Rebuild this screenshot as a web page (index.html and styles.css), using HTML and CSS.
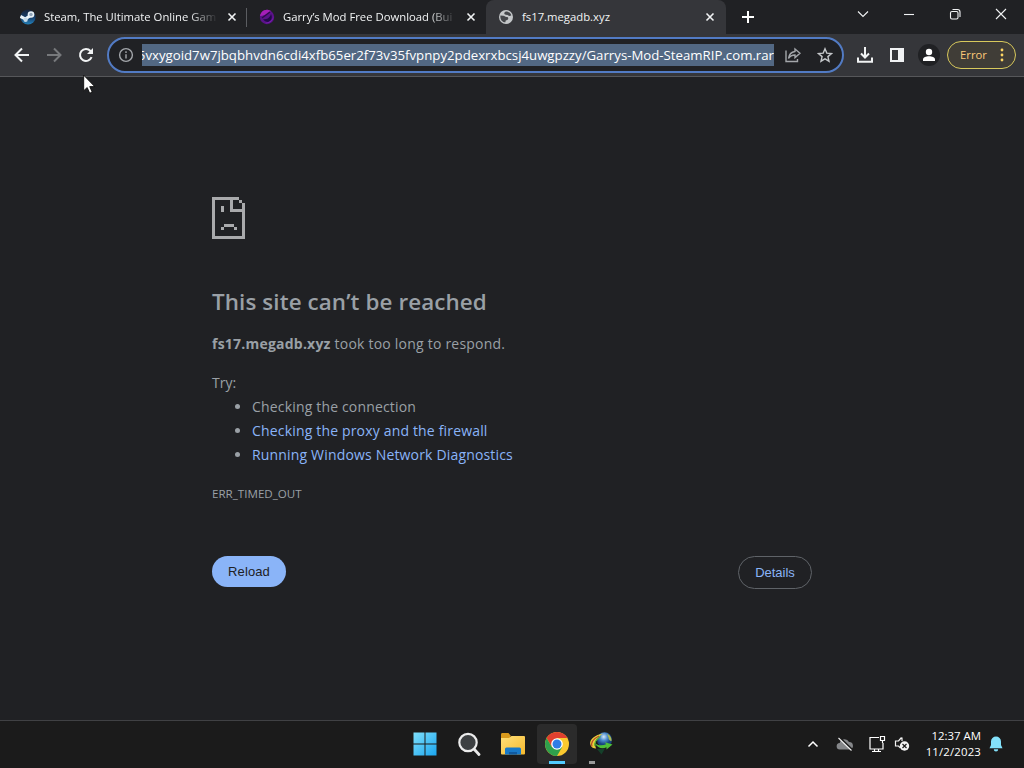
FILE: index.html
```html
<!DOCTYPE html>
<html lang="en">
<head>
    <meta charset="UTF-8">
    <meta name="viewport" content="width=device-width, initial-scale=1.0">
    <title>fs17.megadb.xyz</title>
    <link rel="stylesheet" href="styles.css">
</head>
<body>
    <header class="tab-strip">
        <div class="tab first">
            <svg class="favicon" width="16" height="16" viewBox="0 0 16 16">
                <defs><linearGradient id="steam" x2="0" y2="1"><stop offset="0" stop-color="#18243a"/><stop offset=".55" stop-color="#17406e"/><stop offset="1" stop-color="#2484bd"/></linearGradient></defs>
                <circle cx="8" cy="8" r="7.6" fill="url(#steam)"/>
                <path d="M.4 7.400l5 2.600 5-3.500" fill="none" stroke="#e8f1f8" stroke-width="3"/>
                <circle cx="11" cy="5.500" r="3.300" fill="#e8f1f8"/>
                <circle cx="11" cy="5.500" r="1.700" fill="#8fa3b8"/>
                <circle cx="5.600" cy="10.800" r="2.200" fill="#c3d8e8"/>
            </svg>
            <span class="tab-title">Steam, The Ultimate Online Gam</span>
            <svg class="tab-close" width="10" height="10" viewBox="0 0 10 10"><path d="M1.500 1.500l7 7m0-7l-7 7"/></svg>
        </div>
        <div class="tab">
            <svg class="favicon" width="16" height="16" viewBox="0 0 16 16">
                <circle cx="8" cy="8" r="7.200" fill="#5b128a"/>
                <path d="M1 7a7 7 0 0 1 11-5C8 3 7 7 1 7z" fill="#a51fb8"/>
                <path d="M4 10c5 1 7-2 8-5 2 4 0 7-3 8-2 0-4-1-5-3z" fill="#220a48"/>
                <path d="M6 14c4 0 8-3 8.600-7A7 7 0 0 1 6 14z" fill="#8222ba"/>
                <path d="M3 9l8-6" stroke="#2b0c48" stroke-width="1.200"/>
            </svg>
            <span class="tab-title">Garry’s Mod Free Download (Bui</span>
            <svg class="tab-close" width="10" height="10" viewBox="0 0 10 10"><path d="M1.500 1.500l7 7m0-7l-7 7"/></svg>
        </div>
        <div class="tab active">
            <svg class="favicon" width="16" height="16" viewBox="0 0 16 16">
                <circle cx="8" cy="8" r="7" fill="#c4c7c9"/>
                <path d="M2.400 6.500l3 .3C7 7 7 8 8.500 8s2.200.8 1.500 2.300-2.500.7-2.500 2v1C4 13.300 2 10 2.400 6.500zM8 2.500c2.500 0 4.500 1.500 5.300 3.700-.8 1-2.300 1-3 .3S8.500 6 7 5.500 6.500 2.700 8 2.500z" fill="#45474b"/>
            </svg>
            <span class="tab-title">fs17.megadb.xyz</span>
            <svg class="tab-close" width="10" height="10" viewBox="0 0 10 10"><path d="M1.500 1.500l7 7m0-7l-7 7"/></svg>
        </div>
        <svg class="new-tab" width="14" height="14" viewBox="0 0 14 14"><path d="M7 1v12M1 7h12"/></svg>
        <div class="window-buttons">
            <svg width="12" height="12" viewBox="0 0 12 12"><path d="M1 3.500l5 5 5-5"/></svg>
            <svg width="12" height="12" viewBox="0 0 12 12"><path d="M1 6.500h10"/></svg>
            <svg width="12" height="12" viewBox="0 0 12 12"><rect x="1.500" y="3.500" width="7.500" height="7.500" rx="1.500"/><path d="M3.500 1.500H8.500a2.500 2.500 0 0 1 2.500 2.500v5"/></svg>
            <svg width="12" height="12" viewBox="0 0 12 12"><path d="M1 1l10 10M11 1L1 11"/></svg>
        </div>
    </header>

    <nav class="toolbar">
        <svg class="nav-icon" width="16" height="16" viewBox="0 0 16 16"><path d="M15 8H2M8 1.500L1.500 8 8 14.500"/></svg>
        <svg class="nav-icon disabled" width="16" height="16" viewBox="0 0 16 16"><path d="M1 8h13M8 1.500L14.500 8 8 14.500"/></svg>
        <svg class="nav-icon" width="16" height="16" viewBox="0 0 16 16"><path d="M13.600 10.200A6 6 0 1 1 12.500 4L14 5.500"/><path d="M15 1v6H9z" class="solid"/></svg>
        <div class="omnibox">
            <svg class="info" width="16" height="16" viewBox="0 0 16 16"><circle cx="8" cy="8" r="6.400"/><path d="M8 7.200v4.300M8 4.300v1.600"/></svg>
            <div class="url"><span>5vxygoid7w7jbqbhvdn6cdi4xfb65er2f73v35fvpnpy2pdexrxbcsj4uwgpzzy/Garrys-Mod-SteamRIP.com.rar</span></div>
            <svg class="box-icon" width="16" height="16" viewBox="0 0 16 16"><path d="M1 3.500v11h11.500V12M10 2l5 4.300-5 4.300V8C7 8 5 9 3.500 11.500 4 7.500 6.500 5 10 4.500z"/></svg>
            <svg class="box-icon star" width="16" height="16" viewBox="0 0 16 16"><path d="M8 1.800l1.800 4.300 4.700.4-3.600 3.100 1.100 4.600L8 11.800l-4 2.400 1.100-4.600L1.500 6.500l4.700-.4z"/></svg>
        </div>
        <svg class="tool download" width="18" height="18" viewBox="0 0 18 18"><path d="M9 1v10M5 7.500l4 4 4-4M2 11.500v4.300h14v-4.300"/></svg>
        <svg class="tool" width="16" height="16" viewBox="0 0 16 16"><path d="M1 1h14v14H1zM3 3v10h6V3z" fill="#f1f3f4" fill-rule="evenodd"/></svg>
        <svg class="tool avatar" width="22" height="22" viewBox="0 0 22 22"><circle cx="11" cy="11" r="11" fill="#202124"/><circle cx="11" cy="8" r="3.200" fill="#fff"/><path d="M5 17v-1.500c0-2.200 3-3.300 6-3.300s6 1.100 6 3.300V17z" fill="#fff"/></svg>
        <button class="error-chip">Error <svg width="4" height="16" viewBox="0 0 4 16"><circle cx="2" cy="3" r="1.400"/><circle cx="2" cy="8" r="1.400"/><circle cx="2" cy="13" r="1.400"/></svg></button>
    </nav>

    <main class="error-page">
        <svg class="sad-page" width="33" height="42" viewBox="0 0 33 42" shape-rendering="crispEdges">
            <path d="M0 0h27v3H3v36h27V6h3v36H0zM27 3h3v3h-3zM18 3h3v9h12v3H18zM9 9h3v6H9zM12 27h10v3H12zM9 30h3v3H9zM22 30h3v3h-3z"/>
        </svg>
        <h1>This site can’t be reached</h1>
        <p class="summary"><strong>fs17.megadb.xyz</strong> took too long to respond.</p>
        <p class="try">Try:</p>
        <ul class="suggestions">
            <li>Checking the connection</li>
            <li><a href="#">Checking the proxy and the firewall</a></li>
            <li><a href="#">Running Windows Network Diagnostics</a></li>
        </ul>
        <p class="error-code">ERR_TIMED_OUT</p>
        <div class="buttons">
            <button class="reload">Reload</button>
            <button class="details">Details</button>
        </div>
    </main>

    <footer class="taskbar">
        <div class="apps">
            <div class="app">
                <svg width="24" height="24" viewBox="0 0 24 24">
                    <defs><linearGradient id="win" x2="1" y2="1"><stop offset="0" stop-color="#7fe0fb"/><stop offset="1" stop-color="#1aa5f0"/></linearGradient></defs>
                    <path d="M.5.500h11v11H.5zM12.500.500h11v11h-11zM.5 12.500h11v11H.5zM12.500 12.500h11v11h-11z" fill="url(#win)"/>
                </svg>
            </div>
            <div class="app">
                <svg width="24" height="24" viewBox="0 0 24 24"><path d="M17 17l5 5.500" stroke="#e8e8e8" stroke-width="2.800" stroke-linecap="round"/><circle cx="11" cy="10.500" r="8.700" fill="#3d4042" stroke="#ececec" stroke-width="2.200"/></svg>
            </div>
            <div class="app">
                <svg width="26" height="24" viewBox="0 0 26 24">
                    <defs><linearGradient id="folder" x2="1" y2="1"><stop offset="0" stop-color="#ffe07a"/><stop offset="1" stop-color="#f5b92d"/></linearGradient></defs>
                    <path d="M1 2.500C1 1.500 1.500 1 2.500 1h6l2 2.500V6H1z" fill="#d99a1c"/>
                    <path d="M1 6h8l2.500-2H24q1 0 1 1v16.500q0 1-1 1H2q-1 0-1-1z" fill="url(#folder)"/>
                    <path d="M5 22.500V17q0-1.500 1.500-1.500h13Q21 15.500 21 17v5.500z" fill="#1879c8"/>
                    <path d="M9 22.500V20h8v2.500z" fill="#115a9f"/>
                </svg>
            </div>
            <div class="app current">
                <svg width="24" height="24" viewBox="0 0 24 24">
                    <circle cx="12" cy="12" r="12" fill="#fbc92f"/>
                    <path d="M1.610 6A12 12 0 0 1 22.390 6H12L6.800 15z" fill="#e0402f"/>
                    <path d="M1.610 6L6.800 15 17.200 15 12 24A12 12 0 0 1 1.610 6z" fill="#2fa04c"/>
                    <circle cx="12" cy="12" r="5.800" fill="#fff"/>
                    <circle cx="12" cy="12" r="4.500" fill="#2f7de6"/>
                </svg>
            </div>
            <div class="app idm">
                <svg width="24" height="24" viewBox="0 0 24 24">
                    <defs><radialGradient id="globe" cx=".45" cy=".3"><stop offset="0" stop-color="#d5e8f8"/><stop offset=".5" stop-color="#4d8ccf"/><stop offset="1" stop-color="#17457f"/></radialGradient></defs>
                    <circle cx="15.500" cy="7.800" r="7.500" fill="url(#globe)"/>
                    <path d="M18 2c3 1 5 4 4.500 7-2 0-3-2-3-3.500z" fill="#a9b851"/>
                    <path d="M14 1.500C6 3 .5 7 1.200 12c.5 3 3 4.500 6 4.500C5 13 6 7 14 1.500z" fill="#e8cf3a"/>
                    <path d="M10 4C4 7 1.500 10 3 14.500" fill="none" stroke="#b9482a" stroke-width="1.200"/>
                    <path d="M11.500 4.500C6.500 8 5 11 6 14" fill="none" stroke="#4fae3a" stroke-width="1.200"/>
                    <path d="M6 11.500c4 2.500 8 2 11 .8l-1-2 7.500 2.200-6 5v-2.200c-4 2-9 1-11.500-3.800z" fill="#4fc038"/>
                    <path d="M8 17l8-.5-3.500 6z" fill="#15402a"/>
                </svg>
            </div>
        </div>
        <div class="tray">
            <svg width="12" height="8" viewBox="0 0 12 8"><path d="M1.500 6.500L6 2l4.500 4.500" fill="none" stroke="#fff" stroke-width="1.500"/></svg>
            <svg class="cloud" width="18" height="14" viewBox="0 0 18 14"><path d="M4 12.500a3.200 3.200 0 0 1-.3-6.400A5 5 0 0 1 13 5a3.800 3.800 0 0 1 1 7.500z" fill="#85878a"/><path d="M3.500.500l13 12.500" stroke="#1b1b1b" stroke-width="2"/><path d="M2.500 1l13 12.500" stroke="#f2f2f2" stroke-width="1.100"/></svg>
            <svg class="network" width="18" height="18" viewBox="0 0 18 18"><path d="M11 2.500H2v11.500h13V8M6.500 14v2.500M10.500 14v2.500M4 16.500h9M12.500 1.500h4v4h-4zM14.500 5.500v2.500" fill="none" stroke="#fff" stroke-width="1.200"/></svg>
            <svg class="volume" width="16" height="16" viewBox="0 0 16 16"><path d="M7.500 1.500L4.500 5H1.500v5h3l2 2M8 1.500V5" fill="none" stroke="#f4f4f4" stroke-width="1.200"/><circle cx="10.500" cy="10" r="4.700" fill="#f4f4f4"/><path d="M8.500 8l4 4m0-4l-4 4" stroke="#1b1b1b" stroke-width="1.200"/></svg>
            <div class="clock"><span>12:37 AM</span><span class="date">11/2/2023</span></div>
            <svg width="14" height="16" viewBox="0 0 14 16"><path d="M7 .5a5 5 0 0 1 5 5V9l1.500 3.200H.5L2 9V5.500a5 5 0 0 1 5-5zM4.800 13.200h4.400a2.200 2.200 0 0 1-4.400 0z" fill="#83e1fa"/></svg>
        </div>
    </footer>

    <svg class="cursor" width="13" height="20" viewBox="0 0 13 20"><path d="M.7 1.200v15.500l3.500-3.200 2.500 5.700 2.500-1.100-2.500-5.500h5z" fill="#fff" stroke="#000" stroke-width=".8"/></svg>
</body>
</html>
```
FILE: styles.css
```css
*{
    margin:0;
    padding:0;
    box-sizing:border-box;
}
body{
    width:1024px;
    height:768px;
    overflow:hidden;
    display:flex;
    flex-direction:column;
    background-color:#202124;
    color:#9aa0a6;
    font-family:"Open Sans", "Noto Sans", sans-serif;
}
svg{
    display:block;
    flex-shrink:0;
}
button{
    cursor:pointer;
}

/* tabs */
.tab-strip{
    height:34px;
    display:flex;
    align-items:center;
    padding-left:8px;
}
.tab{
    width:239px;
    height:34px;
    display:flex;
    align-items:center;
    padding:0 10px 0 12px;
}
.tab.first{
    background:linear-gradient(#5b5d61, #5b5d61) right center/1px 19px no-repeat;
}
.tab.active{
    width:240px;
    padding-right:11px;
    background-color:#35363a;
    border-radius:8px 8px 0 0;
}
.tab-title{
    width:176px;
    margin-left:8px;
    font-size:11.3px;
    line-height:18px;
    color:#f1f3f4;
    white-space:nowrap;
}
.tab:not(.active) .tab-title{
    -webkit-mask-image:linear-gradient(to right, #000 145px, transparent 174px);
    mask-image:linear-gradient(to right, #000 145px, transparent 174px);
}
.tab-close{
    margin-left:auto;
    fill:none;
    stroke:#f1f3f4;
    stroke-width:1.6;
}
.new-tab{
    margin-left:15px;
    fill:none;
    stroke:#fff;
    stroke-width:2;
}
.window-buttons{
    margin:-6px 17px 0 auto;
    display:flex;
    gap:34px;
}
.window-buttons svg{
    fill:none;
    stroke:#f1f3f4;
    stroke-width:1.1;
}

/* toolbar */
.toolbar{
    height:43px;
    display:flex;
    align-items:center;
    padding:0 8px 1px 14px;
    background-color:#35363a;
    border-bottom:1px solid #56575a;
}
.nav-icon{
    margin-right:16px;
    fill:none;
    stroke:#f1f3f4;
    stroke-width:2;
}
.nav-icon.disabled{
    stroke:#77797c;
}
.nav-icon .solid{
    fill:#f1f3f4;
    stroke:none;
}
.omnibox{
    width:737px;
    height:36px;
    margin-left:-3px;
    display:flex;
    align-items:center;
    padding:0 9px;
    background-color:#202124;
    border:2px solid #527bc4;
    border-radius:18px;
}
.info, .box-icon{
    fill:none;
    stroke:#a4a7ab;
    stroke-width:1.4;
}
.url{
    width:632px;
    height:22px;
    margin:0 11px 0 8px;
    display:flex;
    justify-content:flex-end;
    overflow:hidden;
    background-color:#526883;
    color:#fff;
    font-size:13.22px;
    line-height:22px;
    white-space:nowrap;
}
.star{
    margin-left:16px;
    stroke:#c4c7c9;
}
.tool{
    margin-left:15px;
}
.tool.download{
    margin-left:12px;
    fill:none;
    stroke:#f1f3f4;
    stroke-width:2;
}
.tool.avatar{
    margin-left:13px;
}
.error-chip{
    width:69px;
    height:28px;
    margin-left:auto;
    display:flex;
    align-items:center;
    justify-content:space-between;
    padding:0 11px 0 12px;
    background-color:#403d37;
    border:1px solid #d8c95c;
    border-radius:14px;
    color:#fbc878;
    font-family:inherit;
    font-size:11.3px;
}
.error-chip svg{
    fill:#fdd663;
}

/* error page */
.error-page{
    height:643px;
    width:600px;
    margin-left:212px;
    padding-top:120px;
    font-size:14px;
    line-height:24px;
    letter-spacing:0.17px;
}
.sad-page{
    fill:#a9aaac;
}
h1{
    margin-top:46px;
    font-size:22.4px;
    font-weight:600;
    line-height:34px;
    letter-spacing:0.1px;
}
.summary{
    margin-top:13px;
    letter-spacing:0.22px;
}
.try{
    margin-top:15px;
    letter-spacing:0;
}
.suggestions{
    padding-left:40px;
}
.suggestions a{
    color:#8ab4f8;
    text-decoration:none;
}
.error-code{
    margin-top:15px;
    font-size:11.6px;
    letter-spacing:0;
}
.buttons{
    margin-top:50px;
    display:flex;
    justify-content:space-between;
    align-items:flex-start;
}
.buttons button{
    width:74px;
    height:31px;
    border:none;
    border-radius:17px;
    font-family:"Liberation Sans", Arial, sans-serif;
    font-size:13px;
}
.buttons .reload{
    background-color:#8ab4f8;
    color:#202124;
    letter-spacing:0.1px;
}
.buttons .details{
    height:33px;
    background:none;
    border:1px solid #5f6368;
    color:#8ab4f8;
}

/* taskbar */
.taskbar{
    height:48px;
    display:flex;
    align-items:center;
    padding-bottom:2px;
    background-color:#1b1b1b;
    border-top:1px solid #404144;
}
.apps{
    margin-left:405px;
    display:flex;
    gap:4px;
}
.app{
    width:40px;
    height:40px;
    display:flex;
    align-items:center;
    justify-content:center;
    border-radius:4px;
}
.app.current{
    background:linear-gradient(#52cbff, #52cbff) center bottom/16px 3px no-repeat #2b2b2b;
}
.app.idm{
    background:linear-gradient(#9a9a9a, #9a9a9a) 8px 37px/6px 3px no-repeat;
}
.tray{
    margin-left:auto;
    display:flex;
    align-items:center;
    padding-right:21px;
}
.cloud{
    margin-left:17px;
}
.network{
    margin-left:14px;
}
.volume{
    margin-left:8px;
}
.clock{
    width:71px;
    margin-right:8px;
    display:flex;
    flex-direction:column;
    align-items:flex-end;
    color:#fff;
    font-size:11.4px;
    line-height:16px;
}
.clock .date{
    letter-spacing:0.15px;
}

.cursor{
    position:absolute;
    left:83px;
    top:74px;
}
```
